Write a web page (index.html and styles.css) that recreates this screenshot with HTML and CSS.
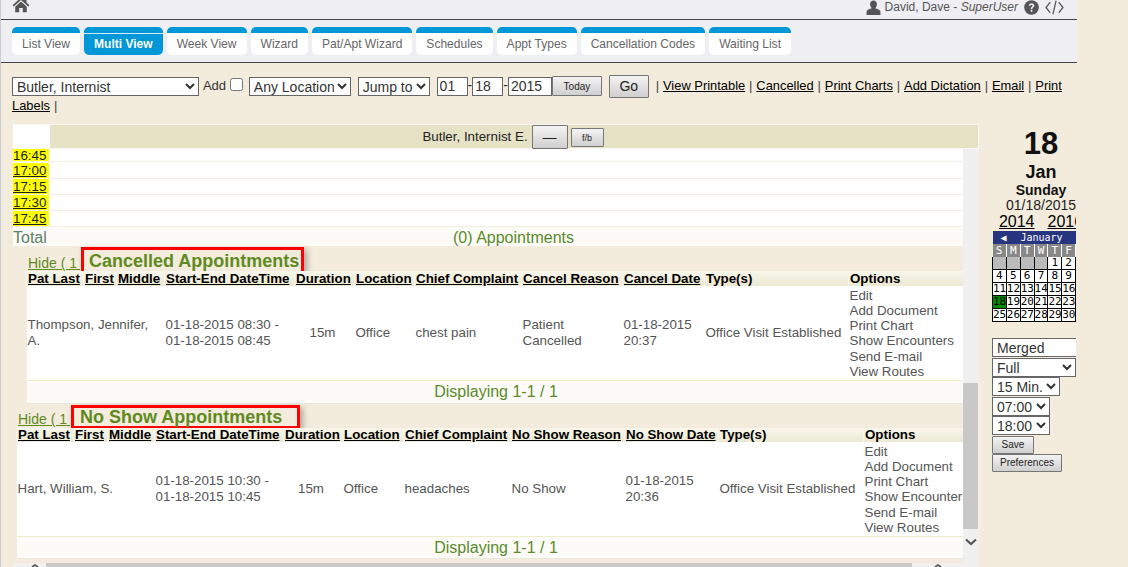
FILE: index.html
```html
<!DOCTYPE html>
<html lang="en">
<head>
    <meta charset="UTF-8">
    <meta name="viewport" content="width=device-width, initial-scale=1.0">
    <title>Multi View</title>
    <link rel="stylesheet" href="styles.css">
</head>
<body>
    <div class="topbar">
        <svg class="home-icon" viewBox="0 0 18 14" width="18" height="14"><path d="M9 -1.5 L0.5 6.2 L1.8 7.5 L9 1 L16.2 7.5 L17.5 6.2 L14.5 3.5 L14.5 -1 L12 -1 L12 1.2 Z M3.2 7.8 L3.2 13.2 L7.2 13.2 L7.2 9 L10.8 9 L10.8 13.2 L14.8 13.2 L14.8 7.8 L9 2.6 Z" fill="#555"/></svg>
        <div class="user-info">
            <svg viewBox="0 0 14 14" width="15" height="15"><path d="M7 0.5 C9.2 0.5 10.2 2.2 10.2 4 C10.2 5.6 9.4 7 8.6 7.6 C10.5 8.3 13.5 9 13.5 11 L13.5 14 L0.5 14 L0.5 11 C0.5 9 3.5 8.3 5.4 7.6 C4.6 7 3.8 5.6 3.8 4 C3.8 2.2 4.8 0.5 7 0.5 Z" fill="#555"/></svg>
            <span class="user-name">David, Dave - <em>SuperUser</em></span>
            <svg viewBox="0 0 16 16" width="15" height="15"><circle cx="8" cy="8" r="7.8" fill="#555"/><path d="M5.2 6.2 C5.2 4.5 6.5 3.5 8.1 3.5 C9.8 3.5 11 4.5 11 5.9 C11 7.9 8.9 7.8 8.9 9.6 L7.1 9.6 C7.1 7.2 9 7.2 9 6 C9 5.4 8.6 5.1 8 5.1 C7.4 5.1 7 5.5 7 6.2 Z M7.1 10.5 L8.9 10.5 L8.9 12.4 L7.1 12.4 Z" fill="#eeeef3"/></svg>
            <svg class="code-icon" viewBox="0 0 18 14" width="19" height="15"><path d="M5 2 L1 7 L5 12 M13 2 L17 7 L13 12 M10.5 0.5 L7.5 13.5" fill="none" stroke="#555" stroke-width="1.2"/></svg>
        </div>
    </div>

    <div class="tabbar">
        <a class="tab">List View</a>
        <a class="tab active">Multi View</a>
        <a class="tab">Week View</a>
        <a class="tab">Wizard</a>
        <a class="tab">Pat/Apt Wizard</a>
        <a class="tab">Schedules</a>
        <a class="tab">Appt Types</a>
        <a class="tab">Cancellation Codes</a>
        <a class="tab">Waiting List</a>
    </div>

    <form class="toolbar">
        <select class="sel-provider"><option>Butler, Internist</option></select>
        <span class="add-label">Add</span> <input type="checkbox" class="add-check">
        <select class="sel-location"><option>Any Location</option></select>
        <select class="sel-jump"><option>Jump to</option></select>
        <input type="text" class="date-part" value="01">-<input type="text" class="date-part" value="18">-<input type="text" class="date-year" value="2015"><button type="button" class="btn btn-today">Today</button>
        <button type="button" class="btn btn-go">Go</button>
        <span class="sep">|</span> <a>View Printable</a> <span class="sep">|</span> <a>Cancelled</a> <span class="sep">|</span> <a>Print Charts</a> <span class="sep">|</span> <a>Add Dictation</a> <span class="sep">|</span> <a>Email</a> <span class="sep">|</span> <a>Print Labels</a> <span class="sep">|</span>
    </form>

    <div class="main">
        <div class="panel">
            <div class="panel-head">
                <div class="corner"></div>
                <div class="provider">
                    Butler, Internist E.
                    <button type="button" class="btn btn-min">—</button>
                    <button type="button" class="btn btn-fb">f/b</button>
                </div>
            </div>
            <div class="panel-body">
                <div class="scroll-area">
                    <div class="time-row first"><a class="time">16:45</a></div>
                    <div class="time-row"><a class="time">17:00</a></div>
                    <div class="time-row"><a class="time">17:15</a></div>
                    <div class="time-row"><a class="time">17:30</a></div>
                    <div class="time-row"><a class="time">17:45</a></div>
                    <div class="total-row">
                        <div class="total-label">Total</div>
                        <div class="total-count">(0) Appointments</div>
                    </div>

                    <div class="section section-cancel">
                        <a class="hide-link">Hide ( 1 )</a>
                        <div class="callout callout-cancel">Cancelled Appointments</div>
                        <table class="appts cancel-table">
                            <colgroup>
                                <col style="width:57px"><col style="width:33px"><col style="width:48px"><col style="width:130px"><col style="width:60px"><col style="width:60px"><col style="width:107px"><col style="width:101px"><col style="width:82px"><col style="width:144px"><col style="width:120px">
                            </colgroup>
                            <thead>
                                <tr>
                                    <th><a>Pat Last</a></th><th><a>First</a></th><th><a>Middle</a></th><th><a>Start-End DateTime</a></th><th><a>Duration</a></th><th><a>Location</a></th><th><a>Chief Complaint</a></th><th><a>Cancel Reason</a></th><th><a>Cancel Date</a></th><th>Type(s)</th><th>Options</th>
                                </tr>
                            </thead>
                            <tbody>
                                <tr>
                                    <td colspan="3">Thompson, Jennifer,<br>A.</td>
                                    <td>01-18-2015 08:30 -<br>01-18-2015 08:45</td>
                                    <td class="center">15m</td>
                                    <td>Office</td>
                                    <td>chest pain</td>
                                    <td>Patient<br>Cancelled</td>
                                    <td>01-18-2015<br>20:37</td>
                                    <td>Office Visit Established</td>
                                    <td class="options">Edit<br>Add Document<br>Print Chart<br>Show Encounters<br>Send E-mail<br>View Routes</td>
                                </tr>
                            </tbody>
                            <tfoot>
                                <tr><td colspan="11">Displaying 1-1 / 1</td></tr>
                            </tfoot>
                        </table>
                    </div>

                    <div class="section section-noshow">
                        <a class="hide-link">Hide ( 1 )</a>
                        <div class="callout callout-noshow">No Show Appointments</div>
                        <table class="appts noshow-table">
                            <colgroup>
                                <col style="width:57px"><col style="width:34px"><col style="width:47px"><col style="width:129px"><col style="width:59px"><col style="width:61px"><col style="width:107px"><col style="width:114px"><col style="width:94px"><col style="width:145px"><col style="width:120px">
                            </colgroup>
                            <thead>
                                <tr>
                                    <th><a>Pat Last</a></th><th><a>First</a></th><th><a>Middle</a></th><th><a>Start-End DateTime</a></th><th><a>Duration</a></th><th><a>Location</a></th><th><a>Chief Complaint</a></th><th><a>No Show Reason</a></th><th><a>No Show Date</a></th><th>Type(s)</th><th>Options</th>
                                </tr>
                            </thead>
                            <tbody>
                                <tr>
                                    <td colspan="3">Hart, William, S.</td>
                                    <td>01-18-2015 10:30 -<br>01-18-2015 10:45</td>
                                    <td class="center">15m</td>
                                    <td>Office</td>
                                    <td>headaches</td>
                                    <td>No Show</td>
                                    <td>01-18-2015<br>20:36</td>
                                    <td>Office Visit Established</td>
                                    <td class="options">Edit<br>Add Document<br>Print Chart<br>Show Encounters<br>Send E-mail<br>View Routes</td>
                                </tr>
                            </tbody>
                            <tfoot>
                                <tr><td colspan="11">Displaying 1-1 / 1</td></tr>
                            </tfoot>
                        </table>
                    </div>
                </div>
                <div class="vbar">
                    <div class="vbar-thumb"></div>
                    <svg viewBox="0 0 12 8" width="12" height="8"><path d="M1 1.5 L6 6 L11 1.5" fill="none" stroke="#555" stroke-width="2.2"/></svg>
                </div>
            </div>
            <div class="hbar">
                <svg viewBox="0 0 10 4" width="10" height="4"><path d="M2 4 L5 2 L8 4" fill="none" stroke="#555" stroke-width="1.6"/></svg>
                <div class="hbar-thumb"></div>
                <svg viewBox="0 0 10 4" width="10" height="4"><path d="M2 4 L5 2 L8 4" fill="none" stroke="#555" stroke-width="1.6"/></svg>
            </div>
        </div>

        <div class="sidebar">
            <div class="date-box">
                <div class="day-num">18</div>
                <div class="day-month">Jan</div>
                <div class="day-name">Sunday</div>
                <div class="day-full">01/18/2015</div>
                <div class="years"><a>2014</a><a>2016</a></div>
            </div>
            <table class="calendar">
                <thead>
                    <tr><th colspan="7" class="cal-title"><div class="cal-title-row"><span>◀</span><span>January</span><span>▶</span></div></th></tr>
                    <tr class="cal-days"><th>S</th><th>M</th><th>T</th><th>W</th><th>T</th><th>F</th><th>S</th></tr>
                </thead>
                <tbody>
                    <tr><td class="off"></td><td class="off"></td><td class="off"></td><td class="off"></td><td>1</td><td>2</td><td>3</td></tr>
                    <tr><td>4</td><td>5</td><td>6</td><td>7</td><td>8</td><td>9</td><td>10</td></tr>
                    <tr><td>11</td><td>12</td><td>13</td><td>14</td><td>15</td><td>16</td><td>17</td></tr>
                    <tr><td class="today">18</td><td>19</td><td>20</td><td>21</td><td>22</td><td>23</td><td>24</td></tr>
                    <tr><td>25</td><td>26</td><td>27</td><td>28</td><td>29</td><td>30</td><td>31</td></tr>
                </tbody>
            </table>
            <div class="side-form">
                <select class="sel-merged"><option>Merged</option></select>
                <select class="sel-full"><option>Full</option></select>
                <select class="sel-min"><option>15 Min.</option></select>
                <select class="sel-hour"><option>07:00</option></select>
                <select class="sel-hour"><option>18:00</option></select>
                <button type="button" class="btn btn-save">Save</button>
                <button type="button" class="btn btn-pref">Preferences</button>
            </div>
        </div>
    </div>
</body>
</html>
```

FILE: styles.css
```css
html, body {
    height: 100%;
}

body {
    margin: 0;
    height: 567px;
    overflow: hidden;
    background-color: #f3ecdd;
    box-shadow: inset 1px 0 0 #c8ccd4;
    color: #000;
    font-family: "Liberation Sans", Arial, sans-serif;
    font-size: 13px;
}

a {
    color: #000;
    text-decoration: underline;
}

/* top bars */
.topbar {
    width: 1076px;
    height: 19px;
    margin-left: 1px;
    display: flex;
    justify-content: space-between;
    background-color: #eeeef3;
    border-bottom: 1px solid #444;
    overflow: hidden;
}

.home-icon {
    margin-left: 11px;
    margin-top: -1px;
}

.user-info {
    display: flex;
    align-items: flex-start;
    gap: 4px;
    padding-right: 13px;
    color: #555;
    font-size: 12px;
    line-height: 14px;
}

.user-name {
    margin-right: 2px;
}

.code-icon {
    margin-left: 2px;
}

.tabbar {
    width: 1065px;
    height: 42px;
    margin-left: 1px;
    padding-left: 11px;
    display: flex;
    align-items: flex-start;
    gap: 4px;
    background-color: #eeeef3;
    border-bottom: 1px solid #444;
}

.tab {
    margin-top: 7px;
    height: 22px;
    padding: 0 10px;
    line-height: 23px;
    background-color: #fff;
    border-top: 6px solid #0097d8;
    border-radius: 5px;
    color: #666;
    font-size: 12.06px;
    text-decoration: none;
}

.tab.active {
    background-color: #0097d8;
    color: #fff;
    font-weight: bold;
    box-shadow: inset 0 1px 0 #d7eef9;
}

/* toolbar */
.toolbar {
    width: 1055px;
    margin: 13px 0 0 12px;
    line-height: 19px;
    font-size: 14px;
    color: #333;
}

.toolbar a {
    font-size: 12.9px;
}

.toolbar .sep {
    color: #444;
    font-size: 13px;
}

.add-label {
    font-size: 13px;
}

select, input[type="text"] {
    font-family: "Liberation Sans", Arial, sans-serif;
    font-size: 14px;
    color: #333;
    background-color: #fff;
    border: 1px solid #666;
    border-radius: 0;
    box-sizing: border-box;
    height: 19px;
    padding: 0;
    vertical-align: middle;
}

input[type="text"] {
    padding-left: 2px;
}

.sel-provider { width: 187px; }
.sel-location { width: 102px; }
.sel-jump { width: 72px; margin-left: 3px; }

.add-check {
    width: 13px;
    height: 13px;
    margin: 0 2px 3px 0;
    vertical-align: middle;
}

.date-part {
    width: 31px;
    margin-left: 3px;
}

.date-part + .date-part {
    margin-left: 0;
}

.date-year {
    width: 44px;
}

.btn {
    font-family: "Liberation Sans", Arial, sans-serif;
    color: #222;
    background: linear-gradient(#f4f4f4, #cfcfcf);
    border: 1px solid #767676;
    border-radius: 1px;
    padding: 0;
    vertical-align: middle;
}

.btn-today {
    width: 50px;
    height: 20px;
    font-size: 10px;
}

.btn-go {
    width: 40px;
    height: 23px;
    font-size: 14px;
    margin: -2px 3px -2px 3px;
}

/* main area */
.main {
    display: flex;
    margin-top: 9px;
}

.panel {
    width: 966px;
    margin-left: 13px;
    flex-shrink: 0;
}

.panel-head {
    display: flex;
    height: 25px;
    border: 1px solid #f9f7ef;
    border-left: 0;
    box-sizing: border-box;
    background-color: #e6e2c6;
}

.corner {
    width: 37px;
    background-color: #fff;
}

.provider {
    flex: 1;
    display: flex;
    align-items: center;
    justify-content: center;
    gap: 3px;
    font-size: 13.33px;
    color: #222;
    padding-right: 2px;
}

.btn-min {
    width: 36px;
    height: 24px;
    margin-left: 1px;
    font-size: 14px;
}

.btn-fb {
    width: 33px;
    height: 19px;
    margin-top: 2px;
    font-size: 9px;
}

.panel-body {
    display: flex;
    height: 414px;
}

.scroll-area {
    width: 950px;
    overflow: hidden;
}

.time-row {
    height: 16.3px;
    display: flex;
    align-items: flex-end;
    background-color: #fff;
    border-bottom: 1px solid #f7eee2;
    box-sizing: border-box;
    overflow: hidden;
    line-height: 16px;
}

.time-row.first {
    height: 13px;
    line-height: 19px;
}

.time {
    width: 36px;
    height: 15px;
    background-color: #ffff00;
    color: #222;
    font-size: 13.33px;
    flex-shrink: 0;
}

.total-row {
    display: flex;
    height: 19px;
    line-height: 21px;
    background-color: #fdfbf7;
    color: #5a8a2a;
    font-size: 16px;
}

.total-label {
    width: 37px;
    color: #5f8068;
}

.total-count {
    flex: 1;
    text-align: center;
    padding-left: 14px;
}

/* appointment sections */
.section {
    position: relative;
}

.section-cancel {
    height: 157px;
    padding-left: 13px;
}

.section-noshow {
    padding-left: 3px;
}

.hide-link {
    position: absolute;
    top: 9px;
    left: 15px;
    color: #5f8a1e;
    font-size: 14px;
    line-height: 16px;
}

.section-noshow .hide-link {
    left: 5px;
    top: 8px;
}

/* red box drawn over the heading, as in the annotated shot */
.callout {
    position: absolute;
    box-sizing: border-box;
    border: 3px solid #f00;
    background-color: rgba(243, 236, 221, 0.9);
    color: #5f8a1e;
    font-size: 18px;
    font-weight: bold;
    box-shadow: 3px 3px 6px rgba(0, 0, 0, 0.3);
    white-space: nowrap;
}

.callout-cancel {
    top: 1px;
    left: 68px;
    width: 223px;
    height: 29px;
    padding-left: 5px;
    line-height: 23px;
}

.callout-noshow {
    top: 2px;
    left: 58px;
    width: 229px;
    height: 24px;
    padding-left: 6px;
    line-height: 18px;
}

.appts {
    table-layout: fixed;
    border-collapse: collapse;
    width: 942px;
    font-size: 13.33px;
    color: #555;
}

.cancel-table {
    position: relative;
    top: 25px;
}

.noshow-table {
    position: relative;
    top: 25px;
}

.appts th {
    height: 15px;
    padding: 0 1px;
    background: linear-gradient(#f8f6ea, #ebe8d2);
    border-left: 1px solid #f8f6ea;
    color: #000;
    font-size: 13.33px;
    line-height: 15px;
    text-align: left;
    white-space: nowrap;
    overflow: hidden;
}

.noshow-table th {
    height: 14px;
    line-height: 14px;
}

.appts tbody td {
    height: 94px;
    padding: 0 1px;
    background-color: #fff;
    border-bottom: 1px solid #eeeec8;
    line-height: 16px;
    white-space: nowrap;
    overflow: hidden;
}

.appts tbody td.center {
    padding-right: 5px;
    text-align: center;
}

.appts tbody td.options {
    line-height: 15.2px;
}

.appts tfoot td {
    height: 22px;
    padding: 0 3px 0 0;
    background-color: #fdfbf7;
    border-bottom: 1px solid #eae8dc;
    color: #5a8a2a;
    font-size: 16px;
    text-align: center;
}

.noshow-table tfoot td {
    height: 21px;
    padding-right: 8px;
}

/* fake scrollbars */
.vbar {
    width: 16px;
    background-color: #f0f0f0;
    display: flex;
    flex-direction: column;
    align-items: center;
}

.vbar-thumb {
    width: 15px;
    height: 146px;
    margin-top: 234px;
    margin-right: 1px;
    background-color: #c8c8c8;
}

.vbar svg {
    margin-top: 9px;
}

.hbar {
    height: 4px;
    display: flex;
    padding-left: 17px;
    background-color: #f0f0f0;
}

.hbar-thumb {
    width: 866px;
    height: 4px;
    margin: 0 21px 0 6px;
    background-color: #c8c8c8;
}

/* right column */
.sidebar {
    width: 84px;
    margin-left: 13px;
    overflow: hidden;
    flex-shrink: 0;
}

.date-box {
    width: 98px;
    text-align: center;
    color: #111;
}

.day-num {
    margin-top: 2px;
    font-size: 31px;
    font-weight: bold;
    line-height: 36px;
}

.day-month {
    font-size: 18px;
    font-weight: bold;
    line-height: 21px;
}

.day-name {
    font-size: 14px;
    font-weight: bold;
    line-height: 15px;
}

.day-full {
    font-size: 14px;
    line-height: 14px;
    color: #222;
}

.years {
    display: flex;
    justify-content: center;
    gap: 13px;
    font-size: 16px;
    line-height: 19px;
}

.calendar {
    width: 98px;
    table-layout: fixed;
    border-collapse: collapse;
    font-family: "DejaVu Sans Mono", monospace;
    font-size: 11px;
}

.calendar th, .calendar td {
    padding: 0;
    text-align: center;
    overflow: hidden;
    white-space: nowrap;
}

.cal-title {
    height: 13px;
    background-color: #27347f;
    color: #fff;
    font-weight: normal;
    font-size: 10px;
    border: 0;
}

.cal-title-row {
    display: flex;
    justify-content: space-between;
    padding: 0 7px 0 8px;
}

.cal-days th {
    height: 13px;
    background-color: #888;
    color: #fff;
    font-weight: normal;
    border-right: 1px solid #fff;
}

.calendar td {
    height: 12px;
    background-color: #fff;
    border: 1px solid #000;
    border-top: 0;
    line-height: 12px;
}

.calendar td.off {
    background-color: #bbb;
}

.calendar td.today {
    background-color: #008a00;
}

.side-form {
    display: flex;
    flex-direction: column;
    align-items: flex-start;
    margin-top: 16px;
}

.side-form select {
    margin-bottom: 0.5px;
}

.sel-merged { width: 98px; }
.sel-full { width: 84px; }
.sel-min { width: 68px; }
.sel-hour { width: 58px; }

.btn-save {
    width: 42px;
    height: 18px;
    font-size: 10px;
}

.btn-pref {
    width: 70px;
    height: 18px;
    font-size: 10px;
}
```
